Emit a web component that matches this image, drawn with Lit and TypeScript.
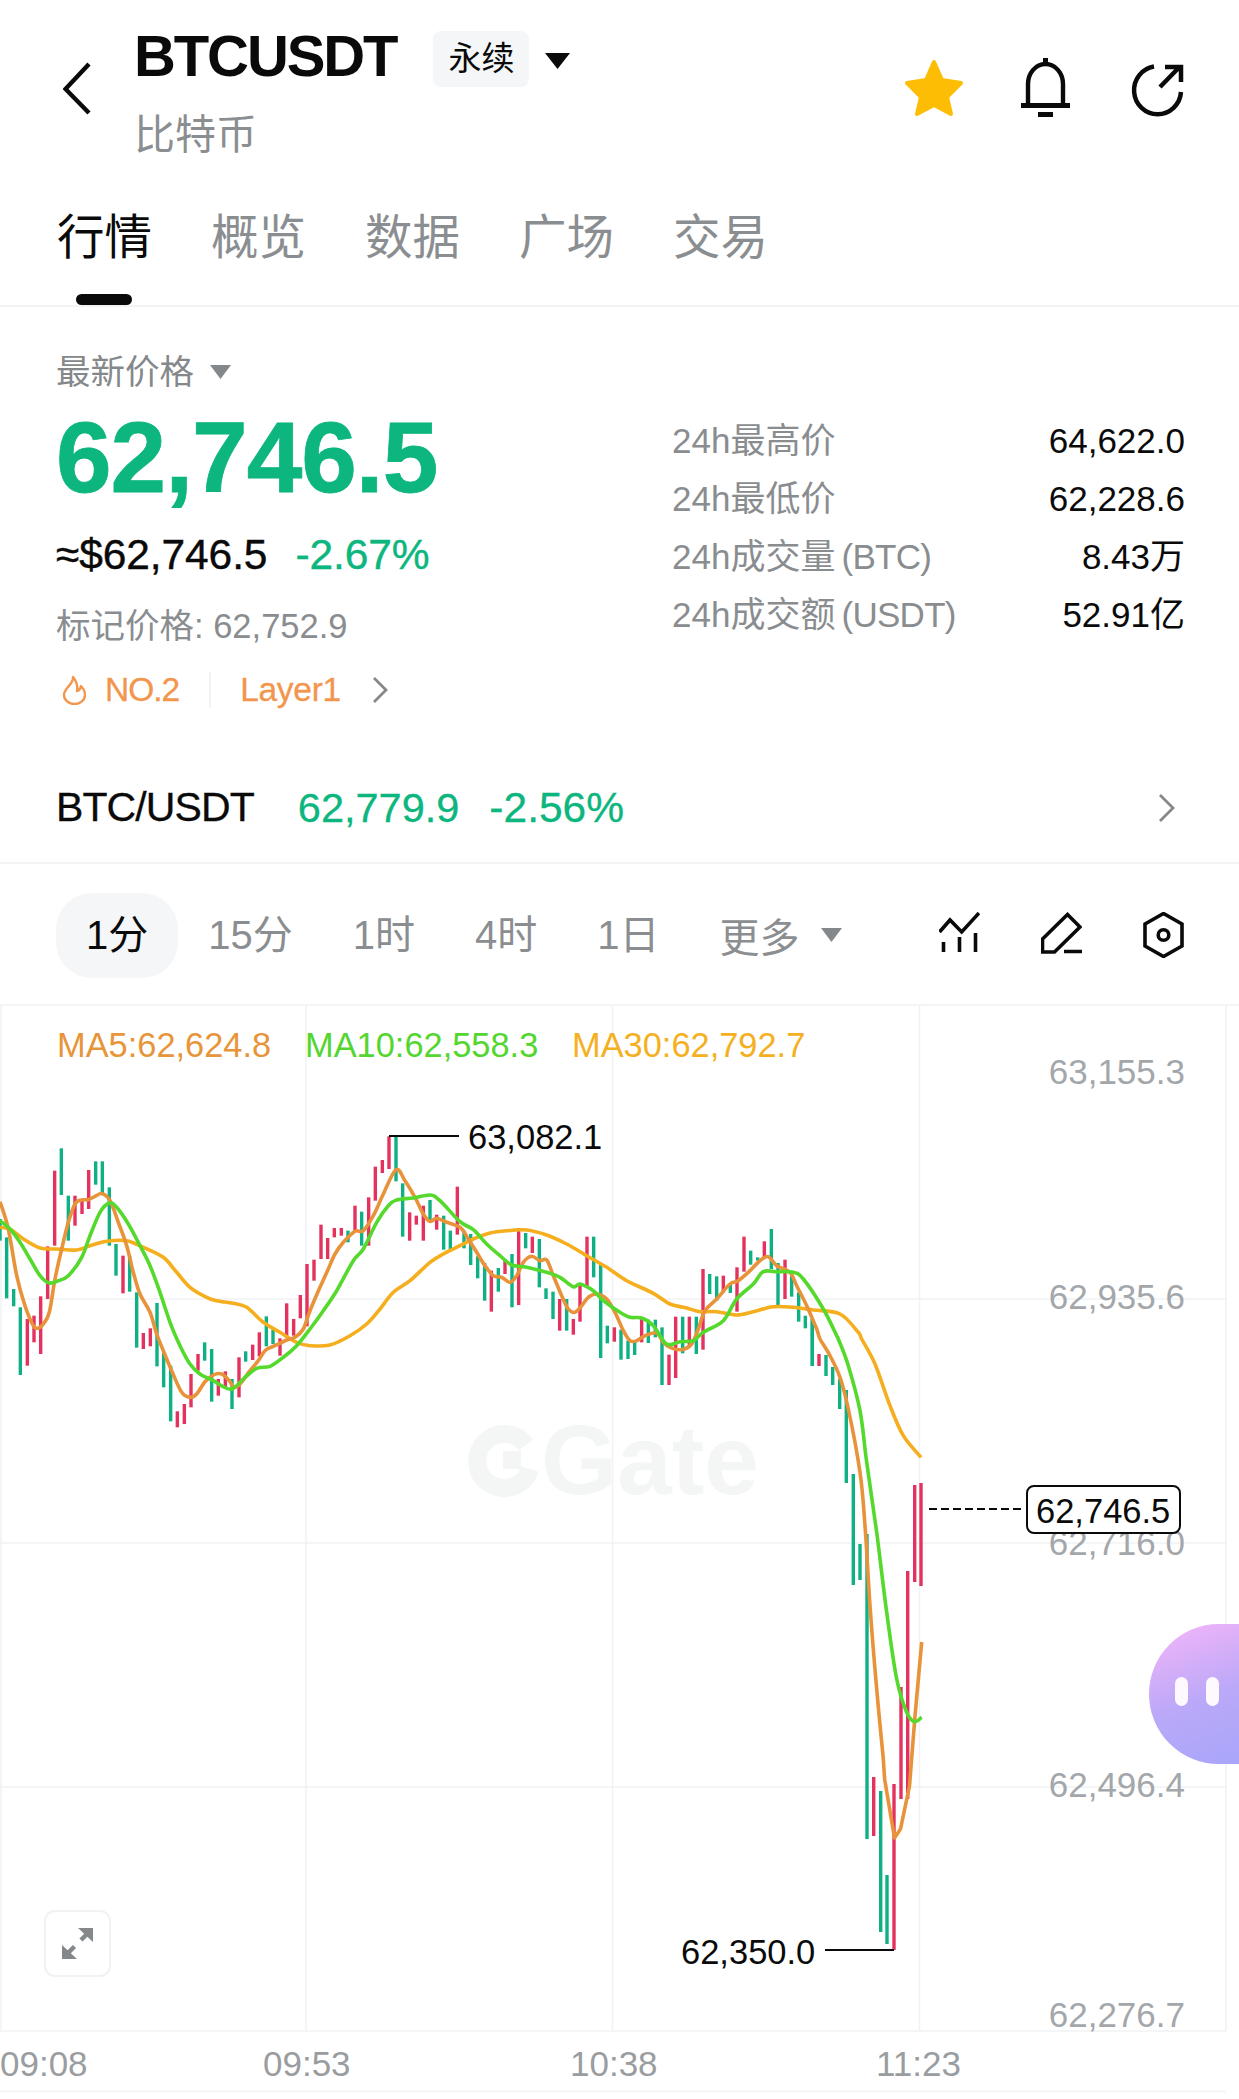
import { LitElement, html, css, svg } from "lit";
import { customElement } from "lit/decorators.js";

type C = [number, number, number, string];
const a: C[] = [[0,480,545,"g"],[20,535,718,"g"],[41,690,742,"g"],[61,745,948,"g"],[82,780,920,"r"],[102,770,850,"r"],[122,712,885,"r"],[143,562,720,"r"],[164,335,560,"r"],[184,268,408,"g"],[205,410,545,"g"],[225,410,500,"r"],[246,425,465,"r"],[266,333,450,"r"],[287,307,377,"g"],[307,307,405,"g"],[328,385,560,"g"],[348,555,650,"g"],[369,590,703,"r"],[389,590,698,"g"],[410,700,866,"g"],[430,822,870,"r"],[451,808,862,"r"],[471,732,922,"g"],[491,880,985,"g"],[512,920,1087,"g"],[532,1057,1105,"r"],[553,1035,1095,"r"],[573,945,1045,"r"],[594,885,935,"r"],[614,850,905,"g"],[635,870,1028,"g"],[655,960,1010,"r"],[676,937,985,"r"],[696,960,1050,"g"],[717,895,1015,"r"],[737,877,908,"g"],[758,857,903,"r"],[778,820,892,"r"],[799,772,862,"g"],[819,812,855,"g"],[840,838,890,"r"],[860,733,835,"r"],[881,780,830,"r"],[901,708,778,"r"],[921,615,802,"r"],[942,602,665,"r"],[963,497,600,"r"],[983,537,600,"r"],[1003,507,535,"r"],[1024,507,530,"r"],[1044,515,550,"g"],[1065,440,515,"r"],[1085,458,560,"g"],[1106,415,560,"r"],[1126,323,425,"r"],[1147,303,342,"r"],[1167,232,330,"r"],[1188,232,367,"g"],[1208,373,533,"g"],[1229,460,545,"r"],[1249,470,497,"r"],[1270,440,545,"r"],[1290,423,490,"g"],[1310,467,512,"r"],[1331,470,572,"g"],[1351,515,570,"g"],[1372,383,527,"r"]];
const b: C[] = [[12,215,268,"g"],[32,225,318,"g"],[53,292,358,"g"],[74,312,425,"g"],[94,335,458,"r"],[115,327,398,"g"],[135,300,345,"r"],[156,285,445,"g"],[176,207,438,"r"],[197,222,268,"g"],[217,233,282,"r"],[238,240,385,"g"],[258,388,420,"g"],[279,398,480,"g"],[299,420,515,"r"],[320,420,515,"g"],[340,480,527,"r"],[360,380,488,"r"],[381,233,385,"r"],[401,233,355,"g"],[422,315,597,"g"],[442,500,553,"g"],[463,505,548,"r"],[483,512,602,"g"],[504,545,600,"g"],[524,548,588,"g"],[545,480,550,"r"],[565,482,552,"g"],[586,482,535,"g"],[606,505,678,"g"],[627,587,678,"r"],[647,473,657,"r"],[668,473,583,"g"],[688,473,560,"r"],[709,473,585,"g"],[729,330,572,"r"],[749,345,405,"g"],[770,352,425,"g"],[790,350,400,"r"],[811,375,402,"g"],[831,325,458,"r"],[852,233,338,"r"],[872,275,317,"g"],[893,295,305,"g"],[913,247,295,"r"],[934,210,330,"g"],[954,312,438,"g"],[975,302,420,"r"],[995,350,413,"g"],[1016,400,488,"g"],[1036,470,508,"g"],[1057,480,620,"g"]];
/* last candles given directly in page pixels: x, top, bottom */
const c: C[] = [[819,1355,1367,"r"],[826,1356,1377,"g"],[832.7,1368,1386,"g"],[839.7,1380,1410,"g"],[846.3,1391,1484,"g"],[853.3,1475,1586,"g"],[860,1545,1581,"g"],[867,1535,1840,"g"],[873.7,1778,1837,"r"],[880.7,1792,1933,"g"],[887,1876,1945,"g"],[894,1785,1951,"r"],[901,1688,1800,"r"],[907.7,1572,1800,"r"],[914.7,1486,1583,"r"],[921,1484,1587,"r"]];
const candles: C[] = [
  ...a.map(([x, t, e, k]): C => [x / 3, 1060 + t / 3, 1060 + e / 3, k]),
  ...b.map(([x, t, e, k]): C => [460 + x / 3, 1160 + t / 3, 1160 + e / 3, k]),
  [812.3, 1320, 1367, "g"],
  ...c,
];

type P = [number, number];
const z7 = (l: number[]) => conv(l, 0, 1060);
const z8 = (l: number[]) => conv(l, 460, 1160);
const z9 = (l: number[]) => conv(l, 780, 1340);
function conv(l: number[], ox: number, oy: number): P[] {
  const r: P[] = [];
  for (let i = 0; i < l.length; i += 2) r.push([ox + l[i] / 3, oy + l[i + 1] / 3]);
  return r;
}
function smooth(p: P[]): string {
  let d = `M${p[0][0].toFixed(1)} ${p[0][1].toFixed(1)}`;
  for (let i = 0; i < p.length - 1; i++) {
    const p0 = p[Math.max(0, i - 1)], p1 = p[i], p2 = p[i + 1], p3 = p[Math.min(p.length - 1, i + 2)];
    const c1x = p1[0] + (p2[0] - p0[0]) / 6, c1y = p1[1] + (p2[1] - p0[1]) / 6;
    const c2x = p2[0] - (p3[0] - p1[0]) / 6, c2y = p2[1] - (p3[1] - p1[1]) / 6;
    d += `C${c1x.toFixed(1)} ${c1y.toFixed(1)} ${c2x.toFixed(1)} ${c2y.toFixed(1)} ${p2[0].toFixed(1)} ${p2[1].toFixed(1)}`;
  }
  return d;
}
const ma5 = smooth([
  ...z7([0,428,25,510,50,650,75,740,100,800,115,807,130,795,148,760,165,660,185,570,205,490,225,435,245,423,265,422,285,412,307,404,330,425,355,490,380,560,400,640,420,705,450,760,470,825,490,875,515,935,545,1000,570,1015,590,1005,615,968,640,948,665,945,690,968,700,985,720,975,750,935,775,905,795,875,820,862,860,843,885,835,910,810,930,755,960,685,985,630,1005,585,1030,550,1065,517,1090,515,1120,470,1150,405,1188,332,1215,365,1245,415,1270,465,1290,487,1310,478,1340,490]),
  ...z8([0,205,25,240,50,280,75,320,100,350,125,355,150,370,170,350,190,310,215,292,240,305,260,303,280,350,305,410,325,450,345,460,365,440,385,415,410,405,440,420,465,460,490,515,510,545,530,545,555,530,590,522,610,550,630,565,665,572,695,555,715,510,735,455,770,420,810,375,835,365,870,335,900,305,925,293,950,320,990,340,1010,380,1040,440,1070,510]),
  ...z9([120,0,150,50,180,115,205,210,240,400,255,560,270,800,290,1050,310,1260]),
]) + "L884.6 1780L894.5 1839L900.5 1830L909.5 1787L915 1717L921.7 1643";
const ma10 = smooth([
  ...z7([0,485,30,510,60,550,90,600,120,650,148,672,175,665,205,650,245,595,270,530,300,460,328,432,350,445,385,495,420,560,450,620,480,700,510,790,540,860,570,915,600,945,640,965,670,983,697,990,730,960,770,928,810,922,850,895,890,860,930,810,970,755,1010,695,1060,605,1090,570,1130,490,1165,440,1190,423,1240,417,1290,408,1320,425]),
  ...z8([0,188,40,212,80,255,120,290,155,318,200,325,260,340,300,355,340,383,360,375,400,395,430,425,480,460,510,475,545,477,580,500,620,555,660,548,700,545,730,520,790,485,830,420,880,375,910,338,950,338,1000,340,1030,360,1090,450,1130,530]),
  ...z9([175,0,205,80,240,215,260,370,290,580,320,820,350,1020,380,1120,403,1148,425,1135]),
]);
const ma30 = smooth([
  ...z7([0,505,30,510,70,540,120,567,170,570,230,573,270,560,320,547,380,545,430,565,490,595,530,640,570,685,620,715,650,725,700,733,740,745,790,790,840,820,890,850,930,860,990,858,1050,830,1100,795,1140,750,1180,700,1230,665,1290,610,1330,585]),
  ...z8([0,260,40,240,90,222,140,215,200,213,260,228,320,255,380,290,440,325,500,365,580,403,630,435,680,447,720,458,770,458,830,468,880,458,940,443,1000,445,1060,453,1140,465,1195,520]),
  ...z9([245,0,285,75,330,200,370,290,423,355]),
]);

const star = "M932 62 L940 80 L959 83 L945 97 L949 114 L932 105 L915 114 L919 97 L905 83 L924 80 Z";

@customElement("app-root")
export class AppRoot extends LitElement {
  static styles = css`
    :host { display: block; width: 1239px; height: 2099px; background: #fff; overflow: hidden; color: #0a0a0a;
      font-family: "Liberation Sans", "Noto Sans CJK SC", sans-serif; }
    svg { display: block; flex: none; }
    .top { display: flex; height: 156px; padding: 0 55px 0 63px; }
    .back { margin-top: 62px; }
    .title-col { margin-left: 41px; }
    .title-row { display: flex; align-items: flex-start; height: 106px; }
    .title { font-size: 58px; font-weight: 700; letter-spacing: -2.1px; line-height: 60px; margin-top: 26px; }
    .tag { width: 96px; height: 56px; margin: 31px 0 0 37px; border-radius: 8px; background: #f5f6f7; font-size: 33px; line-height: 56px; text-align: center; }
    .tri-big { margin: 53px 0 0 16px; }
    .sub { font-size: 41px; line-height: 44px; color: #8b8e91; margin-top: 7px; }
    .top-icons { margin-left: auto; display: flex; align-items: flex-start; }
    .star { margin: 58px 0 0 0; }
    .bell { margin: 58px 0 0 57px; }
    .share { margin: 64px 0 0 59px; }

    .tabs { display: flex; height: 149px; padding-left: 57px; gap: 59px; border-bottom: 2px solid #f2f3f4; }
    .tab { position: relative; font-size: 47.5px; line-height: 60px; margin-top: 52px; color: #8b8e91; height: 97px; }
    .tab.on { color: #0a0a0a; }
    .tab.on::after { content: ""; position: absolute; left: 19px; top: 86px; width: 56px; height: 11px; border-radius: 6px; background: #0a0a0a; }

    .stats { display: flex; padding: 0 54px 0 56px; }
    .left { width: 616px; padding-bottom: 41px; }
    .lbl { display: flex; align-items: center; gap: 16px; margin-top: 45px; font-size: 34.5px; line-height: 40px; color: #85888b; }
    .price { font-size: 100px; font-weight: 700; line-height: 100px; margin-top: 15px; letter-spacing: -1px; -webkit-text-stroke: 0.8px currentColor; color: #0cb67e; }
    .usd { display: flex; gap: 28px; margin-top: 23px; font-size: 42.5px; line-height: 50px; letter-spacing: -0.1px; -webkit-text-stroke: 0.4px currentColor; }
    .green { color: #0cb67e; }
    .mark { margin-top: 26px; font-size: 34.5px; line-height: 40px; color: #8a8d90; }
    .rank { display: flex; align-items: center; margin-top: 24px; font-size: 33.5px; line-height: 40px; color: #f2964d; -webkit-text-stroke: 0.3px currentColor; }
    .no { letter-spacing: -1px; }
    .flame { margin: 0 19px 0 6px; }
    .sep { width: 2px; height: 36px; background: #f3f3f3; margin: 0 29px 0 30px; }
    .layer { letter-spacing: -0.3px; }
    .chev { margin-left: 31px; }
    .right { flex: 1; margin-top: 105px; }
    .stat { display: flex; justify-content: space-between; font-size: 35px; line-height: 58px; color: #0a0a0a; }
    .stat span:first-child { color: #8a8d90; }
    .lat { letter-spacing: -0.7px; word-spacing: -3px; }

    .market { display: flex; align-items: center; height: 109px; padding: 2px 63px 0 56px; border-bottom: 2px solid #f2f3f4; font-size: 41.5px; -webkit-text-stroke: 0.3px currentColor; }
    .pair { font-size: 41px; letter-spacing: -0.9px; margin-right: 44px; }
    .last { margin-right: 30px; }
    .chg { font-size: 42.5px; }
    .market svg { margin-left: auto; }

    .intervals { display: flex; align-items: center; height: 140px; padding: 2px 55px 0 56px; box-sizing: border-box; font-size: 40px; color: #8b8e91; }
    .iv { padding: 0 30px; line-height: 85px; }
    .iv.on { background: #f5f6f7; border-radius: 36px; color: #0a0a0a; }
    .more { display: flex; align-items: center; gap: 21px; padding-left: 30px; }
    .tools { display: flex; gap: 61px; margin-left: auto; }

    .chart { position: relative; height: 1094px; }
    .ax { font-size: 35px; fill: #a4a7aa; }
    .tx { font-size: 35px; fill: #9a9da0; }
    .lab { font-size: 34.5px; fill: #0a0a0a; }
    .lg { font-size: 34.4px; }
    .wm { font-size: 98px; font-weight: 700; fill: #f4f5f5; }
    .bubble { position: absolute; left: 1149px; top: 620px; width: 90px; height: 140px; border-radius: 70px 0 0 70px;
      background: linear-gradient(160deg, #f6b6f9 0%, #bba8f8 55%, #a8a6fa 100%); display: flex; gap: 18px; padding: 53px 0 0 26px; box-sizing: border-box; }
    .eye { width: 13px; height: 29px; border-radius: 7px; background: #fdf9ff; }
    .full { position: absolute; left: 44px; top: 906px; width: 67px; height: 67px; box-sizing: border-box; border: 2px solid #f1f2f3; border-radius: 11px; background: #fff;
      display: flex; align-items: center; justify-content: center; }
  `;

  render() {
    return html`
      <div class="top">
        <svg class="back" width="30" height="54" viewBox="63 61 30 54"><path d="M89 63 L65.5 88 L89 112" fill="none" stroke="#0a0a0a" stroke-width="4.4"/></svg>
        <div class="title-col">
          <div class="title-row">
            <div class="title">BTCUSDT</div>
            <div class="tag">永续</div>
            <svg class="tri-big" width="25" height="16" viewBox="0 0 25 16"><path d="M0 0H25L12.5 16Z" fill="#0a0a0a"/></svg>
          </div>
          <div class="sub">比特币</div>
        </div>
        <div class="top-icons">
          <svg class="star" width="60" height="60" viewBox="902 58 60 60"><path d="${star}" fill="#fdbd05" stroke="#fdbd05" stroke-width="4" stroke-linejoin="round"/></svg>
          <svg class="bell" width="50" height="60" viewBox="1020 58 50 60">
            <path d="M1027 104V84a17.500 20 0 0 1 35 0V104" fill="none" stroke="#0a0a0a" stroke-width="4.4"/>
            <path d="M1020 105.500H1069M1044.500 58V64M1037 114.500H1052" fill="none" stroke="#0a0a0a" stroke-width="5"/>
          </svg>
          <svg class="share" width="54" height="54" viewBox="1129 64 54 54">
            <path d="M1153 66.500A23.500 24 0 1 0 1180 92" fill="none" stroke="#0a0a0a" stroke-width="4.500"/>
            <path d="M1159 87L1178 67.500M1164 67H1180V82" fill="none" stroke="#0a0a0a" stroke-width="4.500"/>
          </svg>
        </div>
      </div>
      <div class="tabs">
        <div class="tab on">行情</div><div class="tab">概览</div><div class="tab">数据</div><div class="tab">广场</div><div class="tab">交易</div>
      </div>
      <div class="stats">
        <div class="left">
          <div class="lbl">最新价格<svg width="21" height="14" viewBox="0 0 21 14"><path d="M0 0H21L10.500 14Z" fill="#85888b"/></svg></div>
          <div class="price">62,746.5</div>
          <div class="usd"><span>≈$62,746.5</span><span class="green">-2.67%</span></div>
          <div class="mark">标记价格: 62,752.9</div>
          <div class="rank">
            <svg class="flame" width="24" height="30" viewBox="61 676 24 30"><path d="M72 678C73 685 63 689 63 696A10.500 9 0 0 0 84 696C84 692 82 689 80 687C79.500 690 78 691.500 76 692C77 687 75 681 72 678Z" fill="none" stroke="#f2964d" stroke-width="2.400" stroke-linejoin="round"/></svg>
            <span class="no">NO.2</span><div class="sep"></div><span class="layer">Layer1</span>
            <svg class="chev" width="16" height="28" viewBox="0 0 16 28"><path d="M2 2L14 14L2 26" fill="none" stroke="#85888b" stroke-width="2.800"/></svg>
          </div>
        </div>
        <div class="right">
          <div class="stat"><span>24h最高价</span><span>64,622.0</span></div>
          <div class="stat"><span>24h最低价</span><span>62,228.6</span></div>
          <div class="stat"><span>24h成交量<span class="lat"> (BTC)</span></span><span>8.43万</span></div>
          <div class="stat"><span>24h成交额<span class="lat"> (USDT)</span></span><span>52.91亿</span></div>
        </div>
      </div>
      <div class="market">
        <span class="pair">BTC/USDT</span><span class="green last">62,779.9</span><span class="green chg">-2.56%</span>
        <svg width="18" height="30" viewBox="0 0 18 30"><path d="M2 2L15 15L2 28" fill="none" stroke="#85888b" stroke-width="2.800"/></svg>
      </div>
      <div class="intervals">
        <div class="iv on">1分</div><div class="iv">15分</div><div class="iv">1时</div><div class="iv">4时</div><div class="iv">1日</div>
        <div class="more"><span>更多</span><svg width="21" height="14" viewBox="0 0 21 14"><path d="M0 0H21L10.500 14Z" fill="#85888b"/></svg></div>
        <div class="tools">
          <svg width="41" height="40" viewBox="939 915 41 40"><path d="M939.500 935L950 923L961.700 935L979 916M943.500 945V955M959.500 940V955M975.500 936V955" fill="none" stroke="#0a0a0a" stroke-width="3.600"/></svg>
          <svg width="41" height="42" viewBox="1041 913 41 42"><path d="M1042.500 953V940L1067.500 915.500L1080 928L1054.500 953ZM1064 952.500H1082" fill="none" stroke="#0a0a0a" stroke-width="3.600"/></svg>
          <svg width="41" height="46" viewBox="1143 913 41 46"><path d="M1163.500 914.500L1182 925V947L1163.500 957.500L1145 947V925Z" fill="none" stroke="#0a0a0a" stroke-width="3.600"/><circle cx="1163.500" cy="936" r="5.300" fill="none" stroke="#0a0a0a" stroke-width="3.600"/></svg>
        </div>
      </div>
      <div class="chart">
        <svg width="1239" height="1094" viewBox="0 1005 1239 1094">
          <path d="M0 1006H1239M0 1300H1226M0 1544H1226M0 1788H1226M0 2032H1226M0 2092.500H1226M1 1006V2032M306 1006V2032M612.500 1006V2032M919.500 1006V2032M1226 1006V2032" stroke="#f1f2f3" stroke-width="1.500" fill="none"/>
          <path d="M526 1446A27 27 0 1 0 530 1470" fill="none" stroke="#f4f5f5" stroke-width="18"/>
          <rect x="503" y="1452" width="18" height="18" fill="#f4f5f5"/>
          <text class="wm" x="541" y="1495">Gate</text>
          ${candles.map(([x, t, e, k]) => svg`<rect x="${x - 1.7}" y="${t}" width="3.400" height="${e - t}" fill="${k === "r" ? "#e4325f" : "#10b085"}"/>`)}
          <path d="${ma30}" fill="none" stroke="#f5ae1d" stroke-width="3.600" stroke-linejoin="round"/>
          <path d="${ma5}" fill="none" stroke="#e8923a" stroke-width="3.600" stroke-linejoin="round"/>
          <path d="${ma10}" fill="none" stroke="#54d92c" stroke-width="3.600" stroke-linejoin="round"/>
          <text class="lg" x="57" y="1058" fill="#e8953a">MA5:62,624.8</text>
          <text class="lg" x="305" y="1058" fill="#53d62f">MA10:62,558.3</text>
          <text class="lg" x="572" y="1058" fill="#f5b021">MA30:62,792.7</text>
          <text class="ax" x="1185" y="1085" text-anchor="end">63,155.3</text>
          <text class="ax" x="1185" y="1310" text-anchor="end">62,935.6</text>
          <text class="ax" x="1185" y="1556" text-anchor="end">62,716.0</text>
          <text class="ax" x="1185" y="1798" text-anchor="end">62,496.4</text>
          <text class="ax" x="1185" y="2028" text-anchor="end">62,276.7</text>
          <text class="tx" x="0" y="2077">09:08</text>
          <text class="tx" x="263" y="2077">09:53</text>
          <text class="tx" x="570" y="2077">10:38</text>
          <text class="tx" x="876" y="2077">11:23</text>
          <path d="M389 1137H459M825 1951H894" stroke="#0a0a0a" stroke-width="2" fill="none"/>
          <text class="lab" x="468" y="1150">63,082.1</text>
          <text class="lab" x="681" y="1965">62,350.0</text>
          <path d="M929 1510H1021" stroke="#0a0a0a" stroke-width="2" stroke-dasharray="8 4" fill="none"/>
          <rect x="1027" y="1487" width="153" height="47" rx="7" fill="#fff" stroke="#0a0a0a" stroke-width="2"/>
          <text class="lab" x="1036" y="1524">62,746.5</text>
        </svg>
        <div class="bubble"><div class="eye"></div><div class="eye"></div></div>
        <div class="full">
          <svg width="33" height="33" viewBox="61 1928 33 33"><path d="M78 1929H93V1943ZM62 1960V1946L77 1960Z" fill="#85888b"/><path d="M87 1935L81 1941M68.500 1953.500L74.500 1947.500" stroke="#85888b" stroke-width="4.500" fill="none"/></svg>
        </div>
      </div>
    `;
  }
}
